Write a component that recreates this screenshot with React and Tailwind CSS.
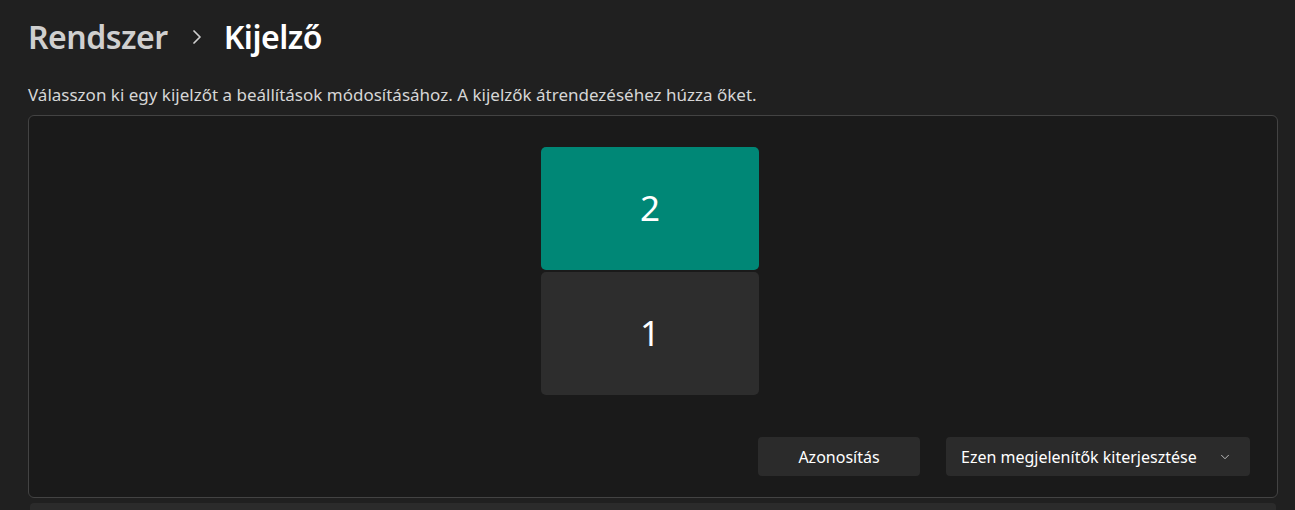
import { ChevronRight, ChevronDown } from 'lucide-react';

const font = { fontFamily: '"Noto Sans", "Open Sans", sans-serif' };

const Monitor = ({ n, active }) => (
  <div
    className={
      'w-[218px] h-[123px] rounded-[5px] flex items-center justify-center text-[35px] text-white ' +
      (active ? 'bg-[#008776]' : 'bg-[#2d2d2d]')
    }
  >
    {n}
  </div>
);

const App = () => {
  return (
    <div className="w-[1295px] h-[510px] bg-[#202020] overflow-hidden text-white" style={font}>
      <div className="px-[28px] pt-[14px]">
        <div className="flex items-center h-[46px] text-[32px] font-semibold tracking-[-0.5px]">
          <span className="text-[#cfcfcf]">Rendszer</span>
          <ChevronRight className="w-[24px] h-[24px] ml-[17px] mr-[15px] text-[#cfcfcf]" strokeWidth={1.75} />
          <span>Kijelző</span>
        </div>

        <div className="mt-[24px] text-[17px] text-[#d6d6d6] leading-[22px]">
          Válasszon ki egy kijelzőt a beállítások módosításához. A kijelzők átrendezéséhez húzza őket.
        </div>

        <div className="mt-[9px] w-[1250px] h-[383px] bg-[#1a1a1a] border border-[#434343] rounded-[6px] flex flex-col">
          <div className="flex flex-col items-center pt-[31px] pr-[6px] gap-[2px]">
            <Monitor n="2" active />
            <Monitor n="1" />
          </div>
          <div className="flex justify-end gap-[26px] mt-[42px] pr-[27px]">
            <button className="w-[162px] h-[39px] rounded-[4px] bg-[#2b2b2b] text-[16px] text-white">
              Azonosítás
            </button>
            <button className="w-[304px] h-[39px] rounded-[4px] bg-[#2b2b2b] text-[16px] text-white flex items-center pl-[15px] pr-[18px]">
              <span className="flex-1 text-left">Ezen megjelenítők kiterjesztése</span>
              <ChevronDown className="w-[14px] h-[14px] text-[#cfcfcf]" strokeWidth={1.5} />
            </button>
          </div>
        </div>

        <div className="mt-[5px] ml-[2px] w-[1246px] h-[20px] bg-[#2b2b2b] rounded-t-[4px]" />
      </div>
    </div>
  );
};

export default App;
